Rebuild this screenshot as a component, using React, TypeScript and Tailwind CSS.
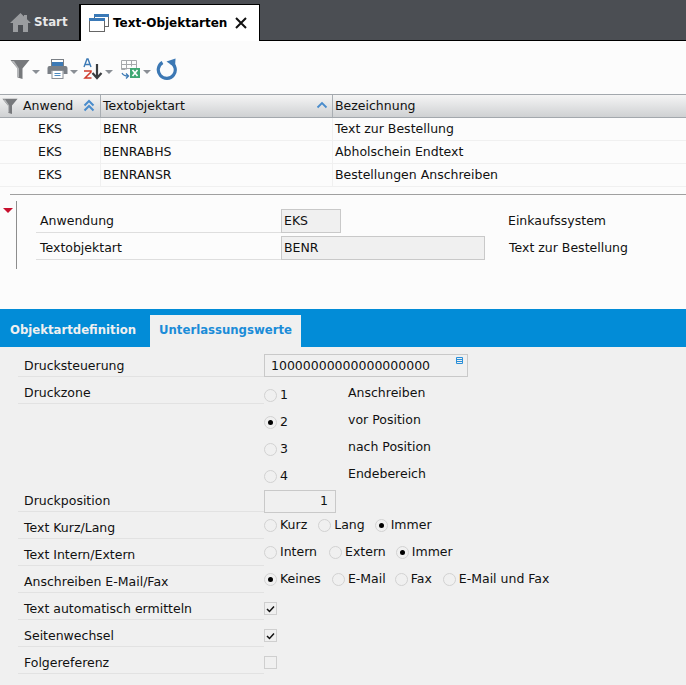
const Caret = () => <span className="ml-[2px] mt-[6px] h-0 w-0 border-x-[4px] border-t-[4px] border-x-transparent border-t-[#8a8f95]" />;

const Funnel = ({ s = 20 }: { s?: number }) => (
  <svg width={s} height={s} viewBox="0 0 20 20"><path d="M0.500 1h19l-7 8.500V20l-5-1.500V9.500z" fill="#77797c" /><path d="M9 9.500v9l-1.500-.5V9.500L1.500 2H4z" fill="#b4b6b8" /></svg>
);

const Toolbar = () => (
  <div className="flex h-[53px] items-center pl-[10px] pt-[3px]">
    <div className="flex w-[37px] items-center">
      <Funnel />
      <Caret />
    </div>
    <div className="flex w-[36px] items-center">
      <svg width="21" height="20" viewBox="0 0 21 20"><rect x="4.500" y="0.500" width="12" height="6" fill="#fff" stroke="#7a7f85" /><rect x="5" y="3" width="11" height="4" fill="#3d7ab5" /><path d="M2.500 7h16a2 2 0 0 1 2 2v6h-4v-3h-12v3h-4V9a2 2 0 0 1 2-2z" fill="#7a7f85" /><rect x="5" y="11.500" width="11" height="8" fill="#fff" stroke="#8a8f95" /><path d="M7.500 14.500h6M7.500 16.500h6" stroke="#4b8ac0" /></svg>
      <Caret />
    </div>
    <div className="flex w-[37px] items-center">
      <svg width="20" height="22" viewBox="0 0 20 22"><path d="M1 9l3-8h1l3 8M2.500 6.500h4" fill="none" stroke="#3d7ab5" strokeWidth="1.400" /><path d="M1 13h7v1l-6 6h6.500" fill="none" stroke="#cf3a2a" strokeWidth="1.500" /><path d="M14 6v14M9.500 15l4.500 5 4.500-5" fill="none" stroke="#3a3c3f" strokeWidth="2.200" /></svg>
      <Caret />
    </div>
    <div className="flex w-[36px] items-center">
      <svg width="21" height="20" viewBox="0 0 21 20"><path d="M1.500 1.500h15v9M1.500 1.500v9h4M1.500 5.500h15M1.500 9.500h15M6.500 1.500v9M11.500 1.500v6" fill="none" stroke="#a5a8ab" /><rect x="10" y="9" width="10" height="10" fill="#3fa873" /><path d="M12.500 11l5 6M17.500 11l-5 6" stroke="#fff" strokeWidth="1.600" /><path d="M2 14c1 2 3 3 6 3M6 14.500l2.500 2.500-2.500 2.500" fill="none" stroke="#3d7ab5" strokeWidth="1.300" /></svg>
      <Caret />
    </div>
    <svg width="22" height="22" viewBox="0 0 22 22"><path d="M6.500 4.500a8.500 8.500 0 1 0 8-.3" fill="none" stroke="#3c78b4" strokeWidth="3.200" /><path d="M19.500 0.500L19 9.500 10.500 3.500z" fill="#3c78b4" /></svg>
  </div>
);

const Th = ({ w, children, border = true }: { w: string; children: React.ReactNode; border?: boolean }) => (
  <div className={`flex h-full items-center ${w} ${border ? "border-r border-[#a9aeb3]" : ""} relative`}>{children}</div>
);

const GridRow = ({ a, b, c }: { a: string; b: string; c: string }) => (
  <div className="flex h-[23px] items-center border-b border-[#f0f0f0]">
    <div className="flex h-full w-[101px] items-center border-r border-[#f0f0f0] pl-[38px]">{a}</div>
    <div className="flex h-full w-[232px] items-center border-r border-[#f0f0f0] pl-[2px]">{b}</div>
    <div className="pl-[2px]">{c}</div>
  </div>
);

const Table = () => (
  <div>
    <div className="flex h-[24px] items-center border-y border-[#a3a8ad] bg-gradient-to-b from-[#f5f5f5] to-[#cfd1d3]">
      <Th w="w-[101px]">
        <span className="ml-[2px] mr-[5px]"><Funnel s={16} /></span>
        <span>Anwend</span>
        <svg className="absolute right-[5px] top-[4px]" width="12" height="13" viewBox="0 0 12 13"><path d="M1.500 6.500L6 2l4.500 4.500M1.500 11.500L6 7l4.500 4.500" fill="none" stroke="#4a8ccc" strokeWidth="2" /></svg>
      </Th>
      <Th w="w-[232px]">
        <span className="pl-[2px]">Textobjektart</span>
        <svg className="absolute right-[4px] top-[6px]" width="12" height="8" viewBox="0 0 12 8"><path d="M1.500 6.500L6 2l4.500 4.500" fill="none" stroke="#4a8ccc" strokeWidth="1.800" /></svg>
      </Th>
      <span className="pl-[2px]">Bezeichnung</span>
    </div>
    <GridRow a="EKS" b="BENR" c="Text zur Bestellung" />
    <GridRow a="EKS" b="BENRABHS" c="Abholschein Endtext" />
    <GridRow a="EKS" b="BENRANSR" c="Bestellungen Anschreiben" />
  </div>
);

const HeadRow = ({ label, value, w, desc }: { label: string; value: string; w: string; desc: string }) => (
  <div className="flex h-[27px]">
    <div className="flex h-full w-[245px] items-center border-b border-[#dedede] pl-[4px] pt-[5px]">{label}</div>
    <div className={`flex h-[24px] ${w} items-center self-end border border-[#c9c9c9] bg-[#f0f0f0] pl-[2px]`}>{value}</div>
    <div className={`flex items-center pt-[3px] ${value === "EKS" ? "ml-[167px]" : "ml-[24px]"}`}>{desc}</div>
  </div>
);

const Detail = () => (
  <div className="h-[122px] pt-[7px]">
    <div className="ml-[10px] border-t border-[#a0a0a0]" />
    <div className="flex pt-[6px]">
      <span className="ml-[3px] mt-[7px] h-0 w-0 border-x-[5px] border-t-[5px] border-x-transparent border-t-[#c8102e]" />
      <div className="ml-[3px] flex h-[68px] flex-col border-l border-[#8d8d8d] pl-[19px] pt-[5px]">
        <HeadRow label="Anwendung" value="EKS" w="w-[60px]" desc="Einkaufssystem" />
        <HeadRow label="Textobjektart" value="BENR" w="w-[204px]" desc="Text zur Bestellung" />
      </div>
    </div>
  </div>
);

const Radio = ({ on }: { on?: boolean }) => (
  <span className="flex h-[13px] w-[13px] shrink-0 items-center justify-center rounded-full border border-[#d2d2d2] bg-[#f0f0f0]">
    {on && <span className="h-[5px] w-[5px] rounded-full bg-black" />}
  </span>
);

const RadioOpt = ({ on, label, cls = "" }: { on?: boolean; label: string; cls?: string }) => (
  <span className={`flex items-center gap-[3px] ${cls}`}>
    <Radio on={on} />
    <span>{label}</span>
  </span>
);

const Check = ({ on }: { on?: boolean }) => (
  <span className="flex h-[13px] w-[13px] items-center justify-center border border-[#cfcfcf] bg-[#f0f0f0]">
    {on && <svg width="9" height="8" viewBox="0 0 9 8"><path d="M1 4l2.500 2.500L8 1.500" fill="none" stroke="#111" strokeWidth="1.500" /></svg>}
  </span>
);

const FormRow = ({ label, children, line = true }: { label?: string; children?: React.ReactNode; line?: boolean }) => (
  <div className="flex h-[27px]">
    <div className={`flex h-full w-[246px] items-center ${line ? "border-b border-[#e2e2e2]" : ""} ml-[18px] pl-[6px] pt-[7px]`}>{label}</div>
    <div className="flex flex-1 items-start">{children}</div>
  </div>
);

const Zone = ({ n, label, on }: { n: string; label: string; on?: boolean }) => (
  <div className="relative flex h-full w-full items-start pt-[10px]">
    <span className="flex w-[84px] items-center gap-[3px] pt-[2px]"><Radio on={on} /><span>{n}</span></span>
    <span>{label}</span>
  </div>
);

const Form = () => (
  <div className="h-[338px] bg-[#f0f0f0] pt-[3px]">
    <FormRow label="Drucksteuerung">
      <div className="relative mt-[4px] flex h-[23px] w-[204px] items-center border border-[#c9c9c9] pl-[6px] pt-[2px]">
        10000000000000000000
        <svg className="absolute right-[4px] top-[2px]" width="7" height="7" viewBox="0 0 7 7"><path d="M0.500 0.500h6v6h-6zM0.500 2.500h6M0.500 4.500h6" fill="none" stroke="#2a8fd8" /></svg>
      </div>
    </FormRow>
    <FormRow label="Druckzone"><Zone n="1" label="Anschreiben" /></FormRow>
    <FormRow line={false}><Zone n="2" label="vor Position" on /></FormRow>
    <FormRow line={false}><Zone n="3" label="nach Position" /></FormRow>
    <FormRow line={false}><Zone n="4" label="Endebereich" /></FormRow>
    <FormRow label="Druckposition">
      <div className="mt-[5px] flex h-[23px] w-[72px] items-center justify-end border border-[#c9c9c9] pr-[7px]">1</div>
    </FormRow>
    <FormRow label="Text Kurz/Lang">
      <div className="flex pt-[7px]">
        <RadioOpt label="Kurz" cls="mr-[11px]" />
        <RadioOpt label="Lang" cls="mr-[10px]" />
        <RadioOpt label="Immer" on />
      </div>
    </FormRow>
    <FormRow label="Text Intern/Extern">
      <div className="flex pt-[7px]">
        <RadioOpt label="Intern" cls="mr-[12px]" />
        <RadioOpt label="Extern" cls="mr-[10px]" />
        <RadioOpt label="Immer" on />
      </div>
    </FormRow>
    <FormRow label="Anschreiben E-Mail/Fax">
      <div className="flex pt-[7px]">
        <RadioOpt label="Keines" on cls="mr-[11px]" />
        <RadioOpt label="E-Mail" cls="mr-[9px]" />
        <RadioOpt label="Fax" cls="mr-[11px]" />
        <RadioOpt label="E-Mail und Fax" />
      </div>
    </FormRow>
    <FormRow label="Text automatisch ermitteln"><div className="pt-[9px]"><Check on /></div></FormRow>
    <FormRow label="Seitenwechsel"><div className="pt-[9px]"><Check on /></div></FormRow>
    <FormRow label="Folgereferenz"><div className="pt-[9px]"><Check /></div></FormRow>
  </div>
);

export default function App() {
  return (
    <div className="h-[685px] w-[686px] overflow-hidden bg-[#fcfcfc] text-[12.5px] leading-none text-[#111] [font-family:'DejaVu_Sans',sans-serif]">
      <div className="flex h-[41px] items-end border-b border-black bg-[#4b4e53]">
        <div className="flex h-[36px] w-[80px] items-center gap-[3px] border-r border-black pl-[10px] text-[11.8px] font-bold text-[#e8e8e8]">
          <svg width="21" height="21" viewBox="0 0 21 21"><path d="M10.500 1L0 11h3v9h5v-7h5v7h5v-9h3l-4-3.800V3h-3v1.400z" fill="#9a9c9f" /></svg>
          <span className="pt-[2px]">Start</span>
        </div>
        <div className="relative top-px flex h-[37px] w-[180px] items-center border-x border-t border-black bg-white pl-[8px] text-[12px] font-bold text-black">
          <svg width="20" height="20" viewBox="0 0 20 20"><rect x="5.500" y="1.500" width="14" height="12" fill="#fff" stroke="#666" /><rect x="5" y="1" width="15" height="3" fill="#3a79b7" /><rect x="0.500" y="5.500" width="15" height="13" fill="#fff" stroke="#666" /><rect x="0" y="5" width="16" height="3" fill="#3a79b7" /></svg>
          <span className="ml-[4px]">Text-Objektarten</span>
          <svg className="ml-[8px]" width="12" height="12" viewBox="0 0 12 12"><path d="M1 1l10 10M11 1L1 11" stroke="#111" strokeWidth="2" /></svg>
        </div>
      </div>
      <Toolbar />
      <Table />
      <Detail />
      <div className="flex h-[38px] items-end bg-[#028cd7] text-[11.7px] font-bold">
        <div className="flex h-[32px] w-[150px] items-center pl-[10px] text-[#f0f0f0]">Objektartdefinition</div>
        <div className="flex h-[32px] w-[151px] items-center justify-center bg-[#f0f0f0] text-[#1b8cd8]">Unterlassungswerte</div>
      </div>
      <Form />
    </div>
  );
}
